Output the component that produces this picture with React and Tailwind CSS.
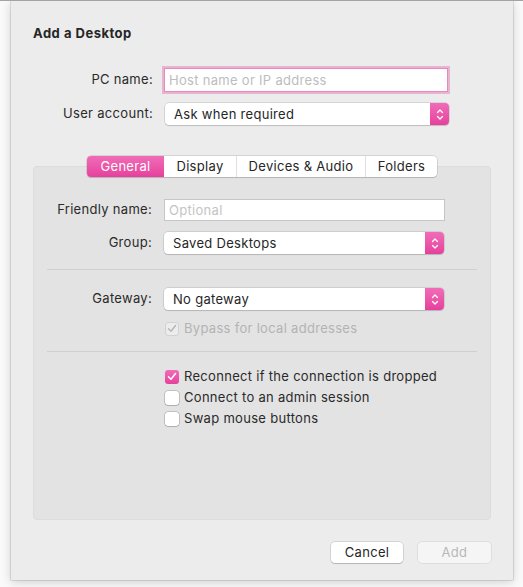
import React from "react";

const font = { fontFamily: "Inter, 'Noto Sans', sans-serif" };

function Stepper() {
  return (
    <div className="flex w-[19px] items-center justify-center self-stretch rounded-r-[4px] bg-gradient-to-b from-[#f06cb8] to-[#e63f9c]">
      <svg width="8" height="13" viewBox="0 0 8 13" fill="none">
        <path d="M1.5 4.5 L4 2 L6.5 4.5" stroke="white" strokeWidth="1.3" strokeLinecap="round" strokeLinejoin="round" />
        <path d="M1.5 8.5 L4 11 L6.5 8.5" stroke="white" strokeWidth="1.3" strokeLinecap="round" strokeLinejoin="round" />
      </svg>
    </div>
  );
}

function Select({ value, width }) {
  return (
    <div
      className={`flex h-[22px] ${width} items-stretch rounded-[4px] bg-white shadow-[0_0_0_0.5px_rgba(0,0,0,0.18),0_1px_1px_rgba(0,0,0,0.12)]`}
    >
      <span className="flex-1 pl-[9px] text-[13px] leading-[22px] text-[#262626]">{value}</span>
      <Stepper />
    </div>
  );
}

function Row({ label, children, labelWidth = "w-[120px]" }) {
  return (
    <div className="flex items-center">
      <span className={`${labelWidth} shrink-0 text-right text-[13px] text-[#2a2a2a]`}>{label}</span>
      <div className="ml-[12px]">{children}</div>
    </div>
  );
}

function Check({ checked, disabled, label }) {
  return (
    <div className="flex h-[21px] items-center">
      {checked && !disabled ? (
        <span className="flex h-[14px] w-[14px] items-center justify-center rounded-[3px] bg-gradient-to-b from-[#f06cb8] to-[#e63f9c]">
          <svg width="10" height="9" viewBox="0 0 10 9" fill="none">
            <path d="M1.5 4.8 L4 7.3 L8.5 1.5" stroke="white" strokeWidth="1.5" strokeLinecap="round" strokeLinejoin="round" />
          </svg>
        </span>
      ) : (
        <span
          className={`flex h-[14px] w-[14px] items-center justify-center rounded-[3px] ${
            disabled ? "border border-[#d2d2d2] bg-[#ececec]" : "bg-white shadow-[0_0_0_0.5px_rgba(0,0,0,0.3),0_1px_1px_rgba(0,0,0,0.1)]"
          }`}
        >
          {checked && (
            <svg width="10" height="9" viewBox="0 0 10 9" fill="none">
              <path d="M1.5 4.8 L4 7.3 L8.5 1.5" stroke="#b5b5b5" strokeWidth="1.4" strokeLinecap="round" strokeLinejoin="round" />
            </svg>
          )}
        </span>
      )}
      <span className={`ml-[5px] text-[13px] ${disabled ? "text-[#b3b3b3]" : "text-[#2a2a2a]"}`}>{label}</span>
    </div>
  );
}

export default function App() {
  const tabs = [
    { name: "General", w: "w-[77px]", active: true },
    { name: "Display", w: "w-[72px]" },
    { name: "Devices & Audio", w: "w-[129px]" },
    { name: "Folders", w: "w-[72px]" },
  ];

  return (
    <div className="h-[587px] w-[523px] overflow-hidden border-t border-[#a3a3a3] bg-[#fafafa] tracking-[0.3px]" style={font}>
      <div className="ml-[11px] flex h-[579px] w-[502px] flex-col bg-[#ececec] px-[22px] pt-[24px] shadow-[0_2px_10px_rgba(0,0,0,0.18),0_0_0_0.5px_rgba(0,0,0,0.2)]">
        <h1 className="text-[13px] font-bold leading-[16px] tracking-[0.5px] text-[#262626]">Add a Desktop</h1>

        <div className="mt-[28px] flex flex-col gap-[12px]">
          <Row label="PC name:">
            <div className="h-[22px] w-[282px] bg-white px-[4px] text-[13px] leading-[22px] text-[#bdbdbd] shadow-[0_0_0_1px_#e58abf,0_0_0_3px_rgba(236,110,180,0.45)]">
              Host name or IP address
            </div>
          </Row>
          <Row label="User account:">
            <Select value="Ask when required" width="w-[284px]" />
          </Row>
        </div>

        <div className="relative z-10 mt-[31px] flex justify-center">
          <div className="flex h-[21px] rounded-[4px] bg-white shadow-[0_0_0_0.5px_rgba(0,0,0,0.2),0_1px_1px_rgba(0,0,0,0.12)]">
            {tabs.map((t, i) => (
              <div
                key={t.name}
                className={`${t.w} flex items-center justify-center text-[13px] ${
                  t.active
                    ? "rounded-l-[4px] bg-gradient-to-b from-[#f06cb8] to-[#e63f9c] text-white"
                    : "text-[#262626]"
                } ${i > 1 ? "border-l border-[#e0e0e0]" : ""}`}
              >
                {t.name}
              </div>
            ))}
          </div>
        </div>

        <div className="-mt-[11px] flex h-[354px] flex-col rounded-[4px] border border-[#dcdcdc] bg-[#e3e3e3] pt-[32px]">
          <div className="flex flex-col gap-[11px]">
            <Row label="Friendly name:" labelWidth="w-[118px]">
              <div className="h-[22px] w-[281px] border border-[#c6c6c6] bg-white px-[4px] text-[13px] leading-[20px] text-[#c4c4c4]">
                Optional
              </div>
            </Row>
            <Row label="Group:" labelWidth="w-[118px]">
              <Select value="Saved Desktops" width="w-[280px]" />
            </Row>
          </div>

          <div className="mx-[13px] mt-[15px] border-t border-[#d0d0d0]" />

          <div className="mt-[18px]">
            <Row label="Gateway:" labelWidth="w-[118px]">
              <Select value="No gateway" width="w-[280px]" />
            </Row>
          </div>
          <div className="ml-[131px] mt-[8px]">
            <Check checked disabled label="Bypass for local addresses" />
          </div>

          <div className="mx-[13px] mt-[12px] border-t border-[#d0d0d0]" />

          <div className="ml-[131px] mt-[14px] flex flex-col">
            <Check checked label="Reconnect if the connection is dropped" />
            <Check label="Connect to an admin session" />
            <Check label="Swap mouse buttons" />
          </div>
        </div>

        <div className="mt-[22px] flex justify-end gap-[15px]">
          <button className="h-[21px] w-[72px] rounded-[4px] bg-white text-[13px] text-[#262626] shadow-[0_0_0_0.5px_rgba(0,0,0,0.2),0_1px_1px_rgba(0,0,0,0.15)]">
            Cancel
          </button>
          <button className="h-[21px] w-[73px] rounded-[4px] bg-[#f5f5f5] text-[13px] text-[#b8b8b8] shadow-[0_0_0_0.5px_rgba(0,0,0,0.12)]">
            Add
          </button>
        </div>
      </div>
    </div>
  );
}
